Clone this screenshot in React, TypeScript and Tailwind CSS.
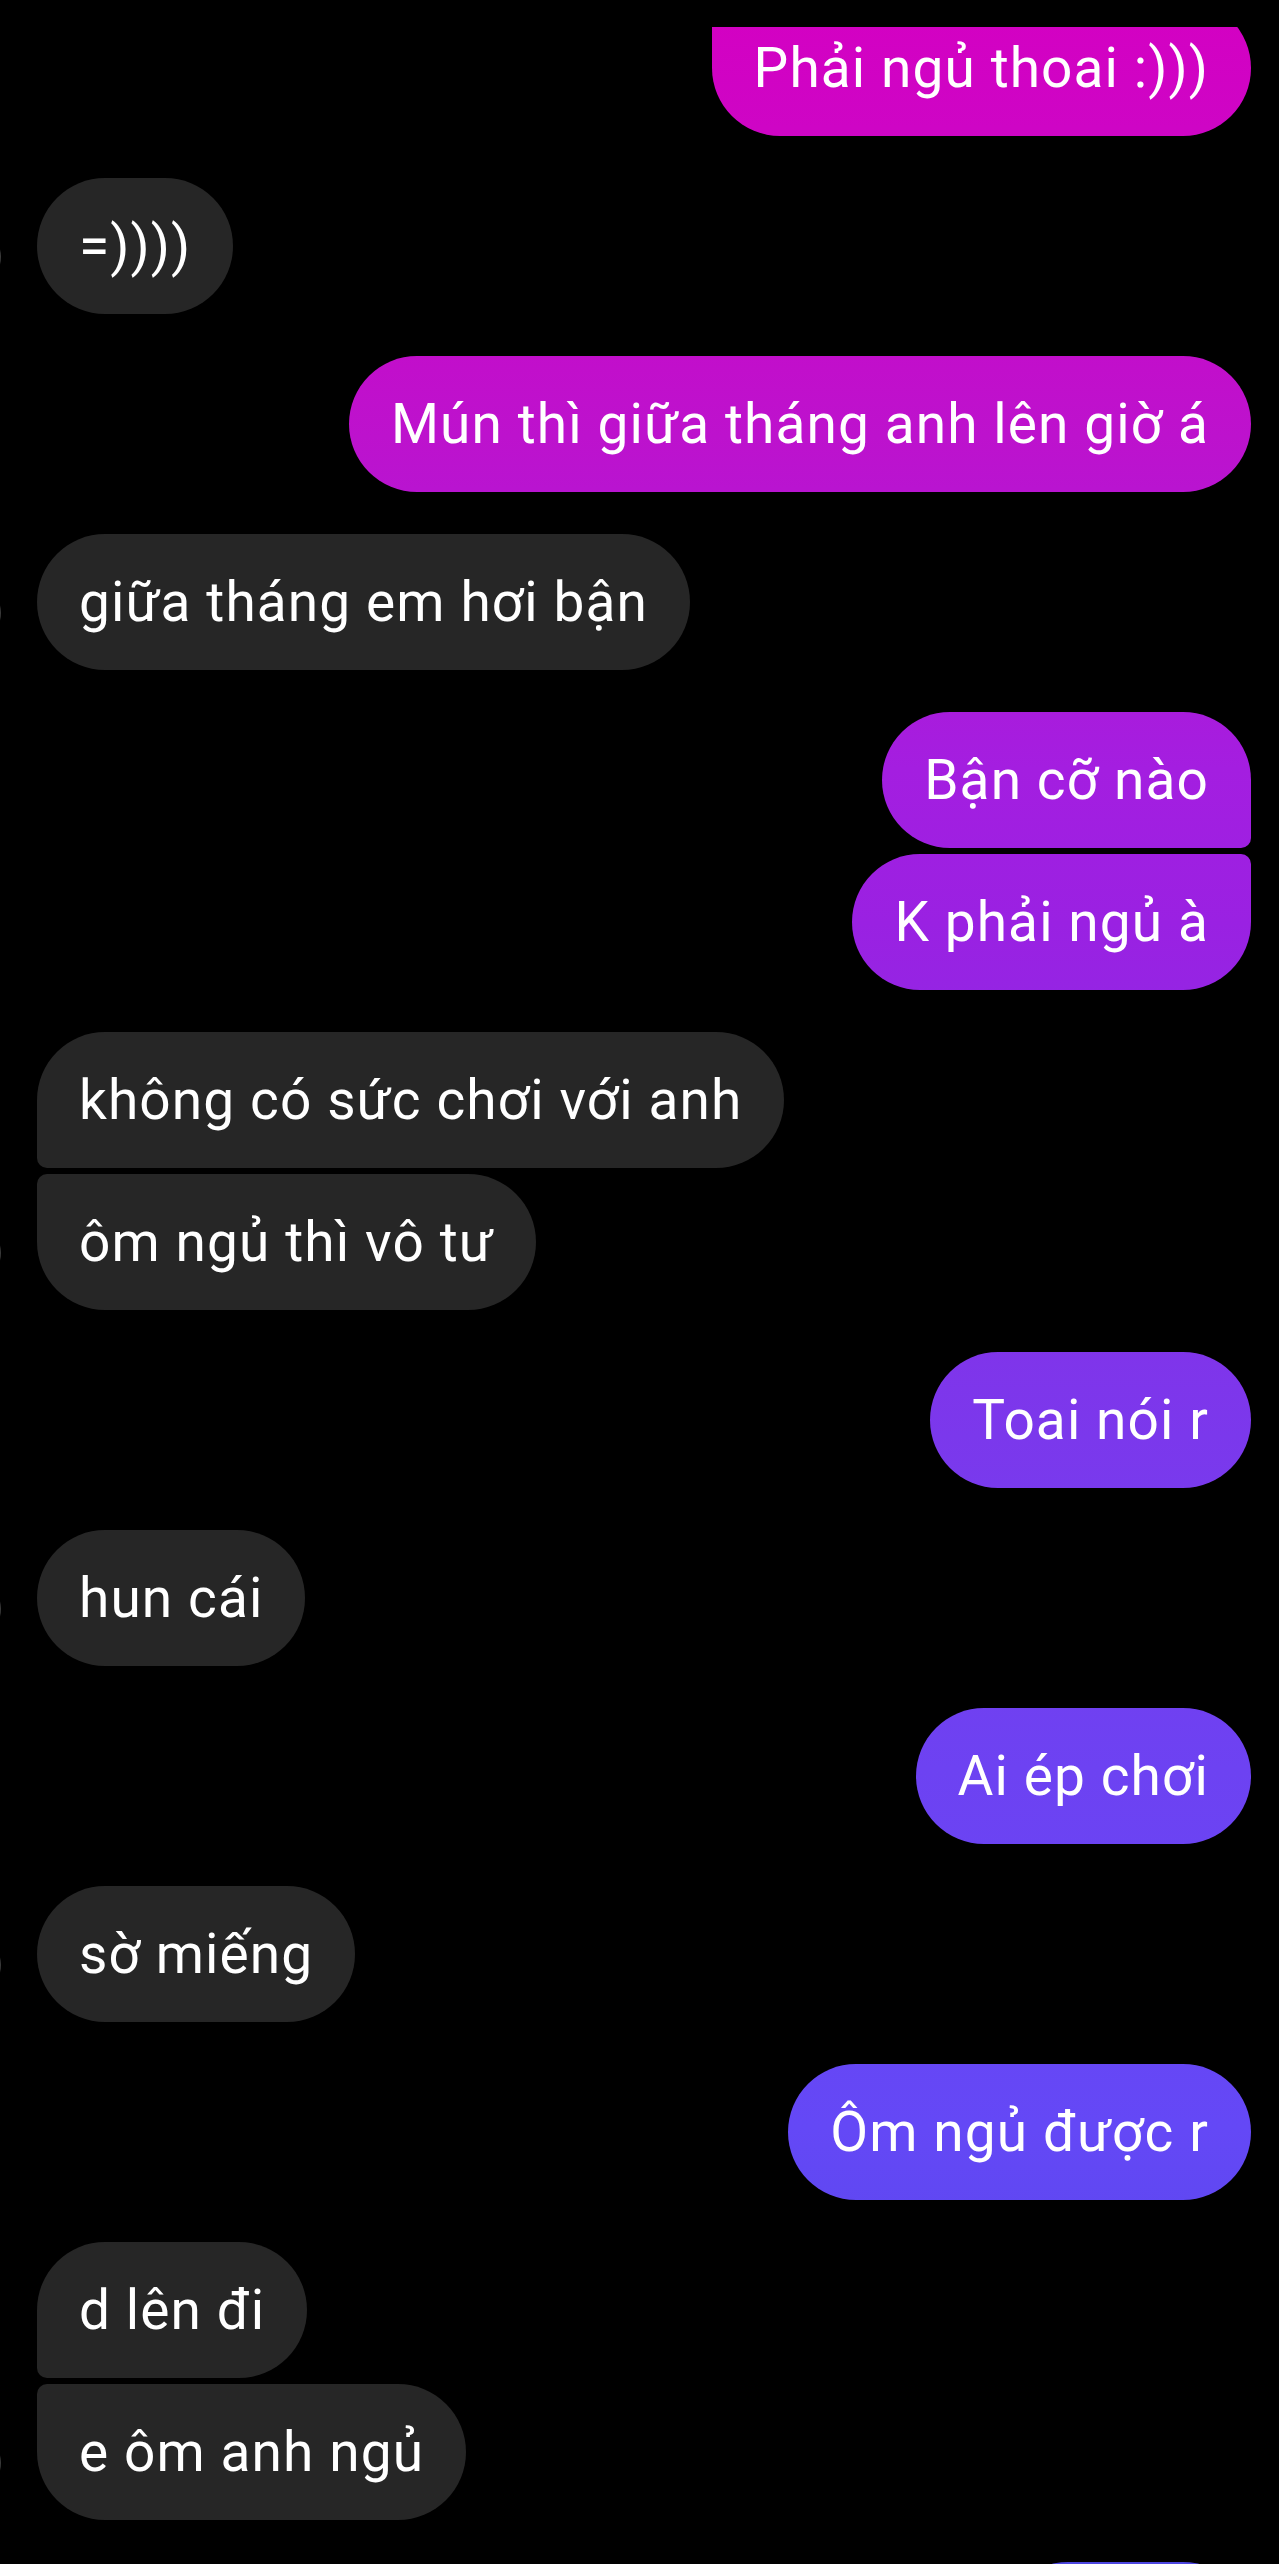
import clsx from "clsx";

type Pos = "single" | "first" | "last";

interface Msg {
  text: string;
  me: boolean;
  pos: Pos;
  clipTop?: boolean;
}

const messages: Msg[] = [
  { text: "Phải ngủ thoai :)))", me: true, pos: "single", clipTop: true },
  { text: "=))))", me: false, pos: "single" },
  { text: "Mún thì giữa tháng anh lên giờ á", me: true, pos: "single" },
  { text: "giữa tháng em hơi bận", me: false, pos: "single" },
  { text: "Bận cỡ nào", me: true, pos: "first" },
  { text: "K phải ngủ à", me: true, pos: "last" },
  { text: "không có sức chơi với anh", me: false, pos: "first" },
  { text: "ôm ngủ thì vô tư", me: false, pos: "last" },
  { text: "Toai nói r", me: true, pos: "single" },
  { text: "hun cái", me: false, pos: "single" },
  { text: "Ai ép chơi", me: true, pos: "single" },
  { text: "sờ miếng", me: false, pos: "single" },
  { text: "Ôm ngủ được r", me: true, pos: "single" },
  { text: "d lên đi", me: false, pos: "first" },
  { text: "e ôm anh ngủ", me: false, pos: "last" },
  { text: "", me: true, pos: "single" },
];

const sentBg =
  "bg-fixed bg-[linear-gradient(to_bottom,#d400c2_0%,#c80ac8_10%,#bd12cd_17%,#a41ee0_30%,#9a21e2_36%,#8a2ce6_45%,#7b38ec_56%,#6d42f2_69%,#6448f6_83%,#4d46e0_100%)]";

function Bubble({ m, index }: { m: Msg; index: number }) {
  const showAvatar = !m.me && (m.pos === "single" || m.pos === "last");
  return (
    <div
      className={clsx(
        "relative flex",
        m.me ? "justify-end" : "justify-start",
        index === 0 ? "" : m.pos === "last" ? "mt-[6px]" : "mt-[42px]"
      )}
    >
      {showAvatar && (
        <div className="absolute left-[-94px] top-[50px] w-[58px] h-[58px] rounded-full bg-[#3a3a3a]" />
      )}
      <div
        className={clsx(
          "h-[136px] flex items-center px-[42px] rounded-[68px] text-white text-[55px] leading-none tracking-[1.1px] whitespace-nowrap",
          m.me ? sentBg : "bg-[#262626]",
          m.text === "" && "w-[251px]",
          m.clipTop && "rounded-tl-[10px]",
          m.me && m.pos === "first" && "rounded-br-[10px]",
          m.me && m.pos === "last" && "rounded-tr-[10px]",
          !m.me && m.pos === "first" && "rounded-bl-[10px]",
          !m.me && m.pos === "last" && "rounded-tl-[10px]"
        )}
        style={{ fontFamily: "Roboto, 'Noto Sans', sans-serif" }}
      >
        {m.text}
      </div>
    </div>
  );
}

export default function App() {
  return (
    <div className="w-[1279px] h-[2564px] bg-black overflow-hidden">
      <div className="h-[27px] bg-black" />
      <div className="h-[2537px] overflow-hidden">
        <div className="-mt-[27px] pl-[37px] pr-[28px]">
          {messages.map((m, i) => (
            <Bubble key={i} m={m} index={i} />
          ))}
        </div>
      </div>
    </div>
  );
}
